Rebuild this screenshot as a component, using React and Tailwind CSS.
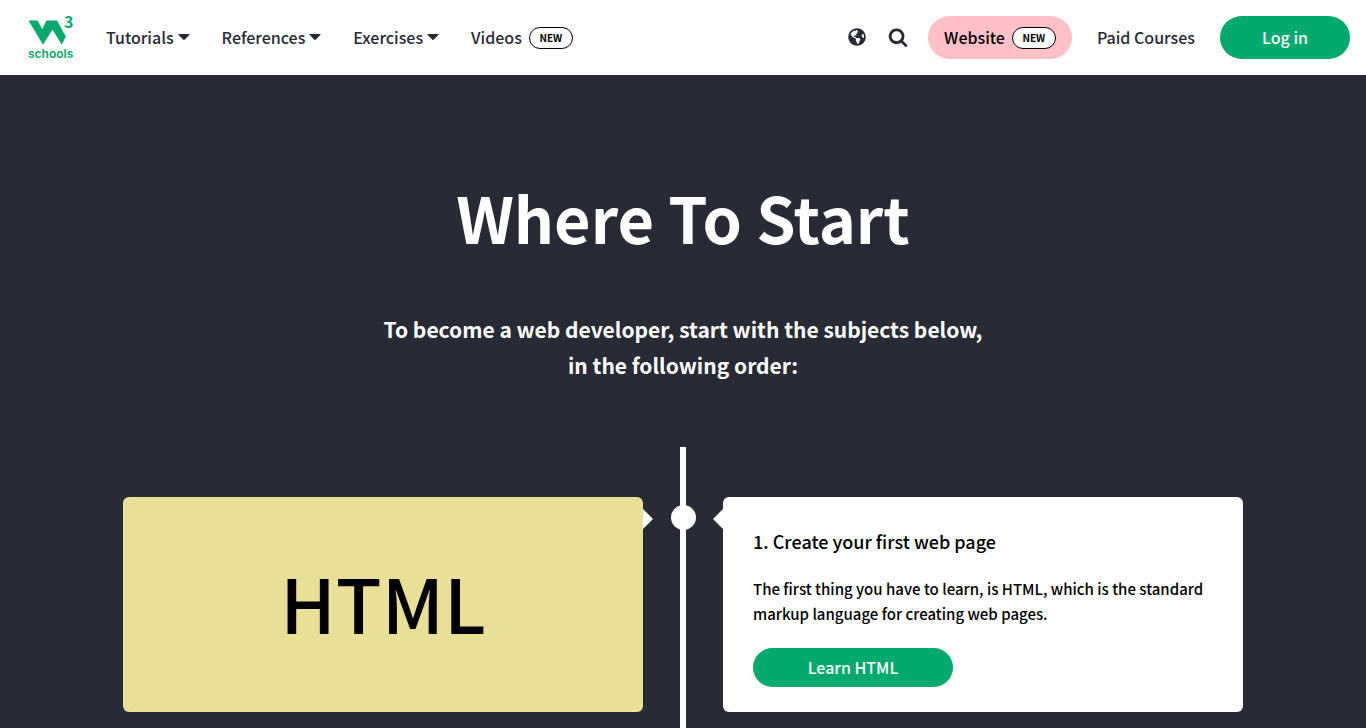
import React from 'react';
import { FaGlobeAmericas } from 'react-icons/fa';

const menus = ['Tutorials', 'References', 'Exercises'];

function Logo() {
  return (
    <svg width="48" height="46" viewBox="0 0 48 46" className="overflow-visible" aria-hidden="true">
      <path d="M0.500 5.500H9.500L14.200 14L18.500 5.500H29L37.800 21.500L33.800 29.800L24.500 14.500L15 29.800Z" fill="#04aa6d" />
      <text x="36" y="13" fontSize="16" fontWeight="700" fontFamily="Noto Sans CJK JP" fill="#04aa6d">3</text>
      <text x="0" y="43" fontSize="12" fontWeight="600" fontFamily="Inter" fill="#04aa6d">schools</text>
    </svg>
  );
}

function Caret() {
  return (
    <svg width="12" height="8" viewBox="0 0 12 8" aria-hidden="true">
      <path d="M0.800 1H11.200Q12.200 1 11.500 1.800L6.600 6.800Q6 7.300 5.400 6.800L0.500 1.800Q-0.200 1 0.800 1Z" fill="#282a35" />
    </svg>
  );
}

function SearchIcon() {
  return (
    <svg width="20" height="20" viewBox="0 0 1792 1792" fill="currentColor" aria-hidden="true">
      <path d="M1216 832q0-185-131.500-316.500t-316.500-131.500-316.500 131.500-131.500 316.500 131.500 316.500 316.500 131.500 316.500-131.500 131.500-316.500zm512 832q0 52-38 90t-90 38q-54 0-90-38l-343-342q-179 124-399 124-143 0-273.500-55.500t-225-150-150-225-55.500-273.500 55.500-273.500 150-225 225-150 273.500-55.500 273.500 55.500 225 150 150 225 55.500 273.500q0 220-124 399l343 343q37 37 37 90z" />
    </svg>
  );
}

function NewBadge() {
  return (
    <span className="flex h-[22px] w-11 items-center justify-center rounded-full border border-black bg-white text-[10px] font-bold text-black">
      NEW
    </span>
  );
}

export default function App() {
  return (
    <div className="flex min-h-screen flex-col bg-[#282a35] font-['Noto_Sans_CJK_JP',sans-serif] font-medium text-[#282a35]">
      <nav className="flex h-[75px] items-center bg-white pr-4 pl-7 text-base">
        <a href="#home" aria-label="W3Schools home" className="mr-[30px]">
          <Logo />
        </a>
        <div className="flex items-center gap-8">
          {menus.map((label) => (
            <button key={label} type="button" className="flex items-center gap-1 pb-0.5">
              {label}
              <Caret />
            </button>
          ))}
          <a href="#videos" className="flex items-center gap-[7px]">
            <span className="pb-0.5">Videos</span>
            <NewBadge />
          </a>
        </div>
        <div className="ml-auto flex items-center gap-[25px]">
          <div className="flex items-center gap-5">
            <div className="flex items-center gap-[22px] pb-px">
              <button type="button" aria-label="Translate">
                <FaGlobeAmericas size={18} />
              </button>
              <button type="button" aria-label="Search">
                <SearchIcon />
              </button>
            </div>
            <a href="#website" className="flex h-[43px] items-center gap-[7px] rounded-full bg-[#ffc0c7] px-4 text-black">
              <span className="pb-0.5">Website</span>
              <NewBadge />
            </a>
          </div>
          <a href="#courses" className="pb-0.5">Paid Courses</a>
          <a href="#login" className="flex h-[43px] w-[130px] items-center justify-center rounded-full bg-[#04aa6d] pb-0.5 text-white">
            Log in
          </a>
        </div>
      </nav>

      <header className="pt-[94px] pb-16 text-center text-white">
        <h1 className="text-[63px] leading-[96px] font-bold">Where To Start</h1>
        <p className="mt-[46px] text-[21px] leading-9 font-bold">
          To become a web developer, start with the subjects below,
          <br />
          in the following order:
        </p>
      </header>

      {/* Timeline */}
      <main className="relative mx-auto grid w-full max-w-[1200px] flex-1 grid-cols-2 items-start pt-[50px] pb-4">
        <div className="absolute inset-y-0 left-1/2 w-1.5 -translate-x-1/2 bg-white"></div>
        <div className="absolute top-[58px] left-1/2 -ml-3 size-[25px] rounded-full bg-white"></div>

        <div className="relative mx-10 flex items-center justify-center self-stretch rounded-md bg-[#e9df97] pb-1 text-black">
          <h2 className="text-[75px]">HTML</h2>
          <div className="absolute top-3 left-full border-y-10 border-l-10 border-y-transparent border-l-white"></div>
        </div>

        <div className="relative mx-10 rounded-md bg-white px-[30px] pt-[29px] pb-[25px] text-black">
          <div className="absolute top-3 right-full border-y-10 border-r-10 border-y-transparent border-r-white"></div>
          <h3 className="text-lg leading-[30px]">1. Create your first web page</h3>
          <p className="mt-5 text-[15px] leading-[25px]">
            The first thing you have to learn, is HTML, which is the standard markup language for creating web pages.
          </p>
          <a href="#html" className="mt-[22px] flex h-[39px] w-[200px] items-center justify-center rounded-full bg-[#04aa6d] pb-0.5 text-base text-white">
            Learn HTML
          </a>
        </div>
      </main>
    </div>
  );
}
